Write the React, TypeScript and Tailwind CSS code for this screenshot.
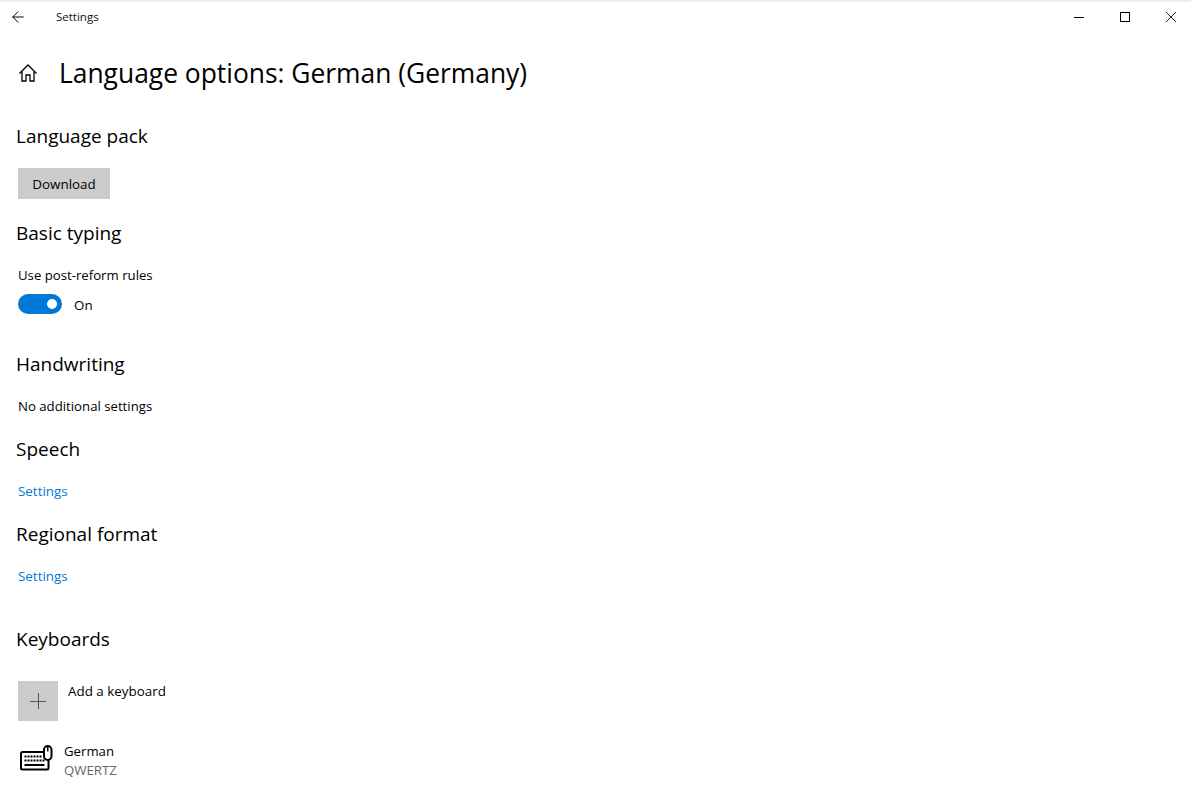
import { ArrowLeft } from 'lucide-react';

function Heading({ children, className = '' }: { children: string; className?: string }) {
  return <h2 className={`text-[19px] leading-[28px] text-black -ml-[2px] ${className}`}>{children}</h2>;
}

function KeyboardIcon() {
  return (
    <svg width="33" height="26" viewBox="0 0 33 26" fill="none" stroke="#000" strokeWidth="2">
      <path d="M24 7H2.500a1.500 1.500 0 0 0-1.500 1.500V23a1.500 1.500 0 0 0 1.500 1.500H27a1.500 1.500 0 0 0 1.500-1.500v-8" />
      <rect x="24" y="1" width="7.500" height="14" rx="3.750" fill="#fff" />
      <path d="M27.750 2v4.500" strokeWidth="1.500" />
      <path d="M4.500 11.500h18M4.500 15.500h20" strokeWidth="2" strokeDasharray="2 1" />
      <path d="M4.500 20h20" strokeWidth="2" />
    </svg>
  );
}

export default function App() {
  return (
    <div className="w-[1191px] h-[791px] overflow-hidden bg-white text-black font-['Open_Sans','Noto_Sans',sans-serif]">
      <div className="h-[2px] bg-[#eeeeee]" />

      {/* title bar */}
      <div className="h-[30px] flex items-center">
        <div className="w-[36px] flex justify-center">
          <ArrowLeft className="w-[18px] h-[18px]" strokeWidth={1.3} />
        </div>
        <span className="ml-[20px] text-[11.5px] text-[#111]">Settings</span>
        <div className="ml-auto pr-[15px] flex items-center gap-[36px]">
          <svg width="10" height="10" viewBox="0 0 10 10" stroke="#000" fill="none"><path d="M0 5.500h10" /></svg>
          <svg width="10" height="10" viewBox="0 0 10 10" stroke="#000" fill="none"><rect x="0.500" y="0.500" width="9" height="9" /></svg>
          <svg width="10" height="10" viewBox="0 0 10 10" stroke="#000" fill="none" strokeWidth="0.9"><path d="M0 0l10 10M10 0L0 10" /></svg>
        </div>
      </div>

      <div className="px-[18px]">
        <div className="flex items-center h-[40px] mt-[21px]">
          <svg width="20" height="20" viewBox="0 0 20 20" fill="none" stroke="#000" strokeWidth="1.300">
            <path d="M1.500 10.500 10 2l8.500 8.500" />
            <path d="M4 8.500V18h4v-6h4v6h4V8.500" />
          </svg>
          <h1 className="ml-[21px] text-[26.4px] leading-[40px]">Language options: German (Germany)</h1>
        </div>

        <Heading className="mt-[29px]">Language pack</Heading>
        <button className="mt-[18px] block w-[92px] h-[31px] pt-[1px] bg-[#cccccc] text-[13.4px] text-black">Download</button>

        <Heading className="mt-[20px]">Basic typing</Heading>
        <p className="mt-[18px] text-[13.2px] leading-[20px]">Use post-reform rules</p>
        <div className="mt-[9px] h-[20px] flex items-start">
          <div className="w-[44px] h-[20px] rounded-full bg-[#0078d7] flex items-center justify-end pr-[5px]">
            <div className="w-[10px] h-[10px] rounded-full bg-white" />
          </div>
          <span className="ml-[12px] text-[13.4px] leading-[20px] pt-[1px]">On</span>
        </div>

        <Heading className="mt-[36px]">Handwriting</Heading>
        <p className="mt-[18px] text-[13.2px] leading-[20px]">No additional settings</p>

        <Heading className="mt-[19px]">Speech</Heading>
        <p className="mt-[18px] text-[13.4px] leading-[20px] text-[#0078d7]">Settings</p>

        <Heading className="mt-[19px]">Regional format</Heading>
        <p className="mt-[18px] text-[13.4px] leading-[20px] text-[#0078d7]">Settings</p>

        <Heading className="mt-[39px]">Keyboards</Heading>
        <div className="mt-[28px] flex items-start">
          <div className="w-[40px] h-[40px] bg-[#cccccc] flex items-center justify-center">
            <svg width="16" height="16" viewBox="0 0 16 16" stroke="#555" fill="none"><path d="M0 8.500h16M8.500 0v16" /></svg>
          </div>
          <span className="ml-[10px] text-[13.4px] leading-[20px]">Add a keyboard</span>
        </div>
        <div className="mt-[20px] flex items-start">
          <div className="ml-[2px] mt-[4px] w-[33px]"><KeyboardIcon /></div>
          <div className="ml-[11px]">
            <div className="text-[13.2px] leading-[20px]">German</div>
            <div className="text-[13.2px] leading-[18px] text-[#666]">QWERTZ</div>
          </div>
        </div>
      </div>
    </div>
  );
}
